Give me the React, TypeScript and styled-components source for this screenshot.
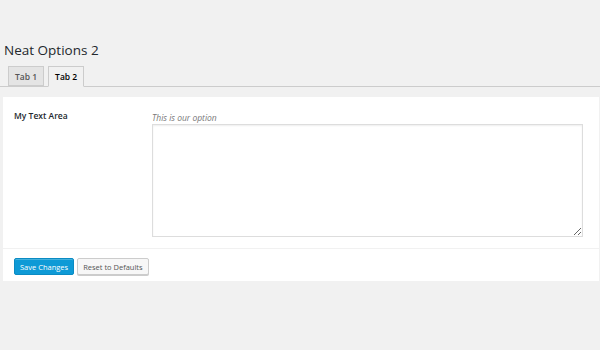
import React, { useState } from 'react'
import styled, { createGlobalStyle } from 'styled-components'

const GlobalStyle = createGlobalStyle`
  html, body {
    margin: 0;
    padding: 0;
    background: #f1f1f1;
    font-family: 'Open Sans', 'Noto Sans', sans-serif;
    color: #444;
  }
`

const Wrap = styled.div`
  padding-top: 41px;
  width: 600px;
  height: 350px;
  box-sizing: border-box;
`

const Title = styled.h1`
  margin: 0 0 0 4px;
  font-size: 13.5px;
  font-weight: 400;
  line-height: 18px;
  color: #23282d;
`

const TabBar = styled.div`
  display: flex;
  gap: 4px;
  margin-top: 7px;
  padding-left: 8px;
  border-bottom: 1px solid #ccc;
  height: 20px;
`

const Tab = styled.div<{ active?: boolean }>`
  display: flex;
  align-items: center;
  justify-content: center;
  box-sizing: border-box;
  height: ${p => (p.active ? '21px' : '20px')};
  padding: 0 6px;
  font-size: 8.5px;
  font-weight: 600;
  color: ${p => (p.active ? '#000' : '#555')};
  background: ${p => (p.active ? '#f1f1f1' : '#e4e4e4')};
  border: 1px solid #ccc;
  border-bottom: ${p => (p.active ? '1px solid #f1f1f1' : '1px solid #ccc')};
  cursor: pointer;
`

const Panel = styled.div`
  margin: 10px 1px 0 3px;
  background: #fff;
`

const FieldRow = styled.div`
  display: grid;
  grid-template-columns: 138px 431px;
  padding: 13px 0 11px 11px;
  border-bottom: 1px solid #f1f1f1;
`

const Label = styled.div`
  font-size: 8.5px;
  font-weight: 600;
  color: #23282d;
  line-height: 12px;
`

const Field = styled.div`
  display: flex;
  flex-direction: column;
`

const Description = styled.div`
  font-size: 8.5px;
  font-style: italic;
  color: #777;
  line-height: 12px;
  margin-top: 2px;
`

const TextArea = styled.textarea`
  box-sizing: border-box;
  width: 431px;
  height: 113px;
  margin: 0;
  border: 1px solid #ddd;
  box-shadow: inset 0 1px 2px rgba(0, 0, 0, 0.07);
  font-family: inherit;
  font-size: 9px;
  resize: both;
  outline: none;
`

const Actions = styled.div`
  display: flex;
  gap: 3px;
  padding: 9px 0 6px 11px;
`

const Button = styled.button<{ primary?: boolean }>`
  height: 17px;
  padding: 0 5px;
  font-family: inherit;
  font-size: 7.5px;
  border-radius: 2px;
  cursor: pointer;
  color: ${p => (p.primary ? '#fff' : '#555')};
  background: ${p => (p.primary ? '#0e9ad6' : '#f7f7f7')};
  border: 1px solid ${p => (p.primary ? '#0b8bc3' : '#ccc')};
  box-shadow: ${p => (p.primary ? 'inset 0 1px 0 rgba(120,200,230,.5)' : '0 1px 0 #ccc')};
`

export default function App() {
  const [tab, setTab] = useState(2)
  const [text, setText] = useState('')

  return (
    <Wrap>
      <GlobalStyle />
      <Title>Neat Options 2</Title>
      <TabBar>
        <Tab active={tab === 1} onClick={() => setTab(1)}>Tab 1</Tab>
        <Tab active={tab === 2} onClick={() => setTab(2)}>Tab 2</Tab>
      </TabBar>
      <Panel>
        <FieldRow>
          <Label>My Text Area</Label>
          <Field>
            <Description>This is our option</Description>
            <TextArea value={text} onChange={e => setText(e.target.value)} />
          </Field>
        </FieldRow>
        <Actions>
          <Button primary>Save Changes</Button>
          <Button>Reset to Defaults</Button>
        </Actions>
      </Panel>
    </Wrap>
  )
}
